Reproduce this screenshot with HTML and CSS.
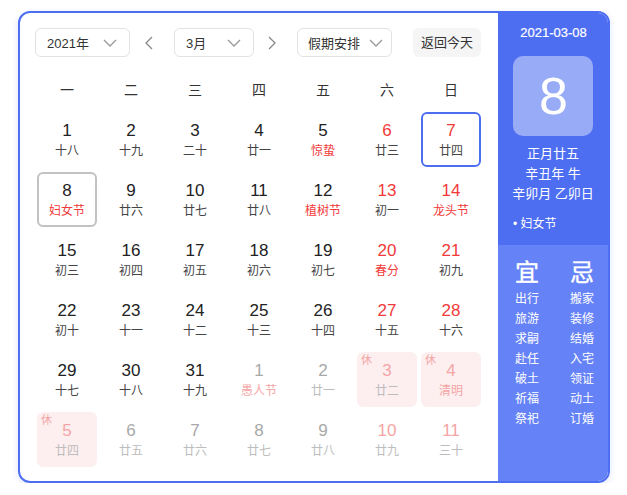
FILE: index.html
```html
<!DOCTYPE html>
<html lang="zh-CN">
<head>
<meta charset="utf-8">
<title>日历</title>
<link rel="stylesheet" href="styles.css">
</head>
<body>
<div class="cal">
  <div class="main">
    <div class="toolbar">
      <div class="select sel-year"><span>2021年</span><svg class="chev" viewBox="0 0 14 8" width="14" height="8"><path d="M1 1l6 6 6-6" fill="none" stroke="#999" stroke-width="1.3"/></svg></div>
      <div class="arrow arrow-prev"><svg viewBox="0 0 8 14" width="8" height="14"><path d="M7 1L1 7l6 6" fill="none" stroke="#888" stroke-width="1.3"/></svg></div>
      <div class="select sel-month"><span>3月</span><svg class="chev" viewBox="0 0 14 8" width="14" height="8"><path d="M1 1l6 6 6-6" fill="none" stroke="#999" stroke-width="1.3"/></svg></div>
      <div class="arrow arrow-next"><svg viewBox="0 0 8 14" width="8" height="14"><path d="M1 1l6 6-6 6" fill="none" stroke="#888" stroke-width="1.3"/></svg></div>
      <div class="select sel-holiday"><span>假期安排</span><svg class="chev" viewBox="0 0 14 8" width="14" height="8"><path d="M1 1l6 6 6-6" fill="none" stroke="#999" stroke-width="1.3"/></svg></div>
      <div class="today-btn">返回今天</div>
    </div>
    <div class="weekdays">
      <span>一</span><span>二</span><span>三</span><span>四</span><span>五</span><span>六</span><span>日</span>
    </div>
    <div class="grid">
      <div class="cell"><div class="num">1</div><div class="lunar">十八</div></div>
      <div class="cell"><div class="num">2</div><div class="lunar">十九</div></div>
      <div class="cell"><div class="num">3</div><div class="lunar">二十</div></div>
      <div class="cell"><div class="num">4</div><div class="lunar">廿一</div></div>
      <div class="cell"><div class="num">5</div><div class="lunar red">惊蛰</div></div>
      <div class="cell"><div class="num red">6</div><div class="lunar">廿三</div></div>
      <div class="cell today"><div class="num red">7</div><div class="lunar">廿四</div></div>

      <div class="cell selected"><div class="num">8</div><div class="lunar red">妇女节</div></div>
      <div class="cell"><div class="num">9</div><div class="lunar">廿六</div></div>
      <div class="cell"><div class="num">10</div><div class="lunar">廿七</div></div>
      <div class="cell"><div class="num">11</div><div class="lunar">廿八</div></div>
      <div class="cell"><div class="num">12</div><div class="lunar red">植树节</div></div>
      <div class="cell"><div class="num red">13</div><div class="lunar">初一</div></div>
      <div class="cell"><div class="num red">14</div><div class="lunar red">龙头节</div></div>

      <div class="cell"><div class="num">15</div><div class="lunar">初三</div></div>
      <div class="cell"><div class="num">16</div><div class="lunar">初四</div></div>
      <div class="cell"><div class="num">17</div><div class="lunar">初五</div></div>
      <div class="cell"><div class="num">18</div><div class="lunar">初六</div></div>
      <div class="cell"><div class="num">19</div><div class="lunar">初七</div></div>
      <div class="cell"><div class="num red">20</div><div class="lunar red">春分</div></div>
      <div class="cell"><div class="num red">21</div><div class="lunar">初九</div></div>

      <div class="cell"><div class="num">22</div><div class="lunar">初十</div></div>
      <div class="cell"><div class="num">23</div><div class="lunar">十一</div></div>
      <div class="cell"><div class="num">24</div><div class="lunar">十二</div></div>
      <div class="cell"><div class="num">25</div><div class="lunar">十三</div></div>
      <div class="cell"><div class="num">26</div><div class="lunar">十四</div></div>
      <div class="cell"><div class="num red">27</div><div class="lunar">十五</div></div>
      <div class="cell"><div class="num red">28</div><div class="lunar">十六</div></div>

      <div class="cell"><div class="num">29</div><div class="lunar">十七</div></div>
      <div class="cell"><div class="num">30</div><div class="lunar">十八</div></div>
      <div class="cell"><div class="num">31</div><div class="lunar">十九</div></div>
      <div class="cell other"><div class="num">1</div><div class="lunar red">愚人节</div></div>
      <div class="cell other"><div class="num">2</div><div class="lunar">廿一</div></div>
      <div class="cell other rest"><span class="rest-tag">休</span><div class="num red">3</div><div class="lunar">廿二</div></div>
      <div class="cell other rest"><span class="rest-tag">休</span><div class="num red">4</div><div class="lunar red">清明</div></div>

      <div class="cell other rest"><span class="rest-tag">休</span><div class="num red">5</div><div class="lunar">廿四</div></div>
      <div class="cell other"><div class="num">6</div><div class="lunar">廿五</div></div>
      <div class="cell other"><div class="num">7</div><div class="lunar">廿六</div></div>
      <div class="cell other"><div class="num">8</div><div class="lunar">廿七</div></div>
      <div class="cell other"><div class="num">9</div><div class="lunar">廿八</div></div>
      <div class="cell other"><div class="num red">10</div><div class="lunar">廿九</div></div>
      <div class="cell other"><div class="num red">11</div><div class="lunar">三十</div></div>
    </div>
  </div>
  <div class="side">
    <div class="side-top">
      <div class="side-date">2021-03-08</div>
      <div class="big-day">8</div>
      <div class="side-lunar">
        <div>正月廿五</div>
        <div>辛丑年 牛</div>
        <div>辛卯月 乙卯日</div>
      </div>
      <div class="side-fest">• 妇女节</div>
    </div>
    <div class="side-bottom">
      <div class="yj-col yj-yi">
        <div class="yj-head">宜</div>
        <div>出行</div><div>旅游</div><div>求嗣</div><div>赴任</div><div>破土</div><div>祈福</div><div>祭祀</div>
      </div>
      <div class="yj-col yj-ji">
        <div class="yj-head">忌</div>
        <div>搬家</div><div>装修</div><div>结婚</div><div>入宅</div><div>领证</div><div>动土</div><div>订婚</div>
      </div>
    </div>
  </div>
</div>
</body>
</html>
```
FILE: styles.css
```css
html, body {
  margin: 0;
  padding: 0;
  background: #fff;
}
body {
  font-family: "Liberation Sans", "Noto Sans CJK SC", Arial, sans-serif;
  color: #333;
}
.cal {
  box-sizing: border-box;
  margin: 11px 0 0 18px;
  width: 592px;
  height: 472px;
  border: 2px solid #4e6ef2;
  border-radius: 12px;
  overflow: hidden;
  display: flex;
  box-shadow: 0 2px 6px rgba(78, 110, 242, 0.18);
}
.main {
  width: 478px;
  flex-shrink: 0;
  box-sizing: border-box;
  padding: 15px 0 0 15px;
}
.toolbar {
  display: flex;
  align-items: center;
  height: 29px;
}
.select {
  box-sizing: border-box;
  height: 29px;
  border: 1px solid #e2e2e2;
  border-radius: 6px;
  display: flex;
  align-items: center;
  justify-content: space-between;
  padding: 0 12px 0 11px;
  font-size: 13px;
  color: #333;
}
.sel-year { width: 95px; }
.sel-month { width: 80px; }
.sel-holiday { width: 95px; padding-right: 8px; padding-left: 10px; }
.chev { display: block; }
.arrow {
  display: flex;
  align-items: center;
  justify-content: center;
  height: 29px;
}
.arrow-prev { width: 44px; padding-right: 6px; box-sizing: border-box; }
.arrow-next { width: 43px; padding-right: 7px; box-sizing: border-box; }
.today-btn {
  margin-left: 21px;
  width: 68px;
  height: 29px;
  box-sizing: border-box;
  border-radius: 6px;
  background: #f5f5f6;
  font-size: 13px;
  line-height: 29px;
  text-align: center;
  color: #333;
}
.weekdays {
  margin-top: 15px;
  display: grid;
  grid-template-columns: repeat(7, 64px);
  height: 36px;
  line-height: 36px;
  font-size: 14px;
  text-align: center;
  color: #333;
}
.grid {
  margin: 4px 0 0 2px;
  display: grid;
  grid-template-columns: repeat(7, 60px);
  grid-auto-rows: 55px;
  column-gap: 4px;
  row-gap: 5px;
}
.cell {
  position: relative;
  box-sizing: border-box;
  border: 2px solid transparent;
  border-radius: 6px;
  text-align: center;
  padding-top: 6px;
}
.num {
  font-size: 17px;
  line-height: 22px;
  color: #222;
}
.lunar {
  font-size: 12px;
  line-height: 18px;
  color: #444;
}
.red { color: #f23a3a; }
.today { border-color: #4e6ef2; }
.selected { border-color: #c2c2c2; }
.other .num { color: #a8a8a8; }
.other .lunar { color: #bdbdbd; }
.other .num.red { color: #f4a5a5; }
.other .lunar.red { color: #f4a5a5; }
.rest { background: #fdeff0; border-color: #fdeff0; }
.rest-tag {
  position: absolute;
  left: 2px;
  top: 0;
  font-size: 11px;
  line-height: 13px;
  color: #f4a5a5;
}
.side {
  width: 110px;
  flex-shrink: 0;
  display: flex;
  flex-direction: column;
  color: #fff;
}
.side-top {
  background: #4e6ef2;
  height: 232px;
  box-sizing: border-box;
  padding-top: 12px;
  text-align: center;
}
.side-date {
  font-size: 13px;
  line-height: 16px;
  padding-left: 1px;
  -webkit-text-stroke: 0.2px #fff;
}
.big-day {
  margin: 15px auto 0;
  width: 80px;
  height: 80px;
  border-radius: 10px;
  background: rgba(255, 255, 255, 0.42);
  font-size: 52px;
  line-height: 80px;
  padding-left: 1px;
  box-sizing: border-box;
}
.side-lunar {
  margin-top: 8px;
  font-size: 13px;
  line-height: 20px;
}
.side-fest {
  margin-top: 12px;
  text-align: left;
  padding-left: 15px;
  font-size: 12px;
  line-height: 16px;
}
.side-bottom {
  flex: 1;
  background: #6582f6;
  display: flex;
  padding: 14px 0 0 17px;
  font-size: 12px;
  line-height: 20px;
}
.yj-col { flex-shrink: 0; }
.yj-yi { width: 55px; }
.yj-head {
  font-size: 24px;
  line-height: 28px;
  margin-bottom: 2px;
  -webkit-text-stroke: 0.4px #fff;
}
```
